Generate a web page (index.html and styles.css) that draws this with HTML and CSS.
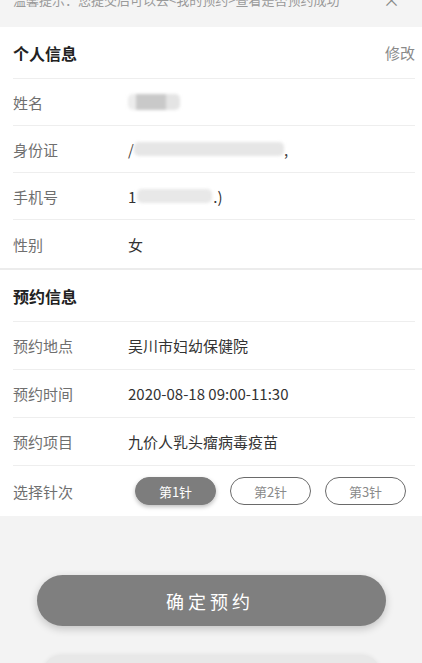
FILE: index.html
```html
<!DOCTYPE html>
<html lang="zh">
<head>
<meta charset="utf-8">
<link rel="stylesheet" href="styles.css">
</head>
<body>
<div class="tip">
  <span class="tip-text">温馨提示：您提交后可以去&lt;我的预约&gt;查看是否预约成功</span>
  <span class="tip-close">×</span>
</div>

<section class="card card-first">
  <div class="card-head">
    <span class="card-title">个人信息</span>
    <span class="card-edit">修改</span>
  </div>
  <div class="row"><span class="label">姓名</span><span class="value"><span class="blur blur-name"></span></span></div>
  <div class="row"><span class="label">身份证</span><span class="value"><span class="mask-char">/</span><span class="blur blur-id"></span><span class="mask-char">,</span></span></div>
  <div class="row"><span class="label">手机号</span><span class="value">1<span class="blur blur-phone"></span>.)</span></div>
  <div class="row"><span class="label">性别</span><span class="value">女</span></div>
</section>

<section class="card card-second">
  <div class="card-head">
    <span class="card-title">预约信息</span>
  </div>
  <div class="row"><span class="label">预约地点</span><span class="value">吴川市妇幼保健院</span></div>
  <div class="row"><span class="label">预约时间</span><span class="value">2020-08-18 09:00-11:30</span></div>
  <div class="row"><span class="label">预约项目</span><span class="value">九价人乳头瘤病毒疫苗</span></div>
  <div class="row"><span class="label">选择针次</span>
    <span class="doses">
      <span class="dose dose-active">第1针</span>
      <span class="dose">第2针</span>
      <span class="dose">第3针</span>
    </span>
  </div>
</section>

<div class="actions">
  <button class="btn-primary">确定预约</button>
  <button class="btn-secondary"></button>
</div>
</body>
</html>
```

FILE: styles.css
```css
html, body {
  margin: 0;
  padding: 0;
}
body {
  background: #f3f3f3;
  font-family: "Noto Sans CJK SC", "Noto Sans", sans-serif;
  width: 422px;
  height: 663px;
  overflow: hidden;
}
.tip {
  display: flex;
  justify-content: space-between;
  align-items: center;
  margin-top: -11px;
  padding: 0 22px 17px 13px;
  height: 21px;
  background: #f4f4f4;
  color: #9a9a9a;
  font-size: 13px;
  line-height: 21px;
}
.tip-close {
  font-size: 17px;
  color: #888;
}
.card {
  background: #fff;
  padding: 0 7px 0 13px;
}
.card-second {
  border-top: 2px solid #ececec;
}
.card-head {
  display: flex;
  justify-content: space-between;
  align-items: center;
  height: 51px;
  border-bottom: 1px solid #eeeeee;
}
.card-title {
  font-size: 16px;
  font-weight: bold;
  color: #222;
}
.card-edit {
  font-size: 15px;
  color: #8a8a8a;
}
.row {
  display: flex;
  align-items: center;
  height: 47px;
  border-bottom: 1px solid #eeeeee;
  font-size: 15px;
}
.card-first .row {
  height: 46px;
}
.card-first .row:last-child {
  height: 48px;
}
.card-second .row:last-child {
  height: 50px;
}
.row:last-child {
  border-bottom: none;
}
.label {
  width: 115px;
  flex-shrink: 0;
  color: #6f6f6f;
}
.value {
  color: #333;
  display: flex;
  align-items: center;
}
.blur {
  display: inline-block;
  height: 14px;
  background: #e2e2e2;
  border-radius: 5px;
  filter: blur(1.5px);
}
.blur-name {
  width: 52px;
  height: 16px;
  background: linear-gradient(90deg, #ececec 0 8px, #c9c9c9 8px 38px, #e4e4e4 38px);
}
.blur-id {
  width: 150px;
  background: #e6e6e6;
}
.blur-phone {
  width: 75px;
  margin: 0 1px;
  background: #e8e8e8;
}
.mask-char {
  color: #444;
}
.doses {
  display: flex;
  gap: 14px;
  margin-left: 7px;
}
.dose {
  box-sizing: border-box;
  width: 81px;
  height: 28px;
  border: 1px solid #6a6a6a;
  border-radius: 14px;
  display: flex;
  align-items: center;
  justify-content: center;
  font-size: 13px;
  color: #8a8a8a;
  background: #fff;
}
.dose-active {
  background: #7d7d7d;
  border-color: #7d7d7d;
  color: #fff;
  box-shadow: 0 2px 4px rgba(0, 0, 0, 0.25);
}
.actions {
  display: flex;
  flex-direction: column;
  align-items: center;
  padding-top: 59px;
  gap: 29px;
}
.btn-primary {
  width: 349px;
  height: 51px;
  border: none;
  border-radius: 26px;
  background: #7f7f7f;
  color: #fff;
  font-family: "Noto Sans CJK SC", sans-serif;
  font-size: 18px;
  letter-spacing: 4px;
  padding-left: 4px;
  box-shadow: 0 3px 8px rgba(0, 0, 0, 0.2);
}
.btn-secondary {
  width: 339px;
  height: 40px;
  border: none;
  border-radius: 20px;
  background: #e8e8e8;
  box-shadow: 0 -1px 4px rgba(0, 0, 0, 0.06);
}
```
